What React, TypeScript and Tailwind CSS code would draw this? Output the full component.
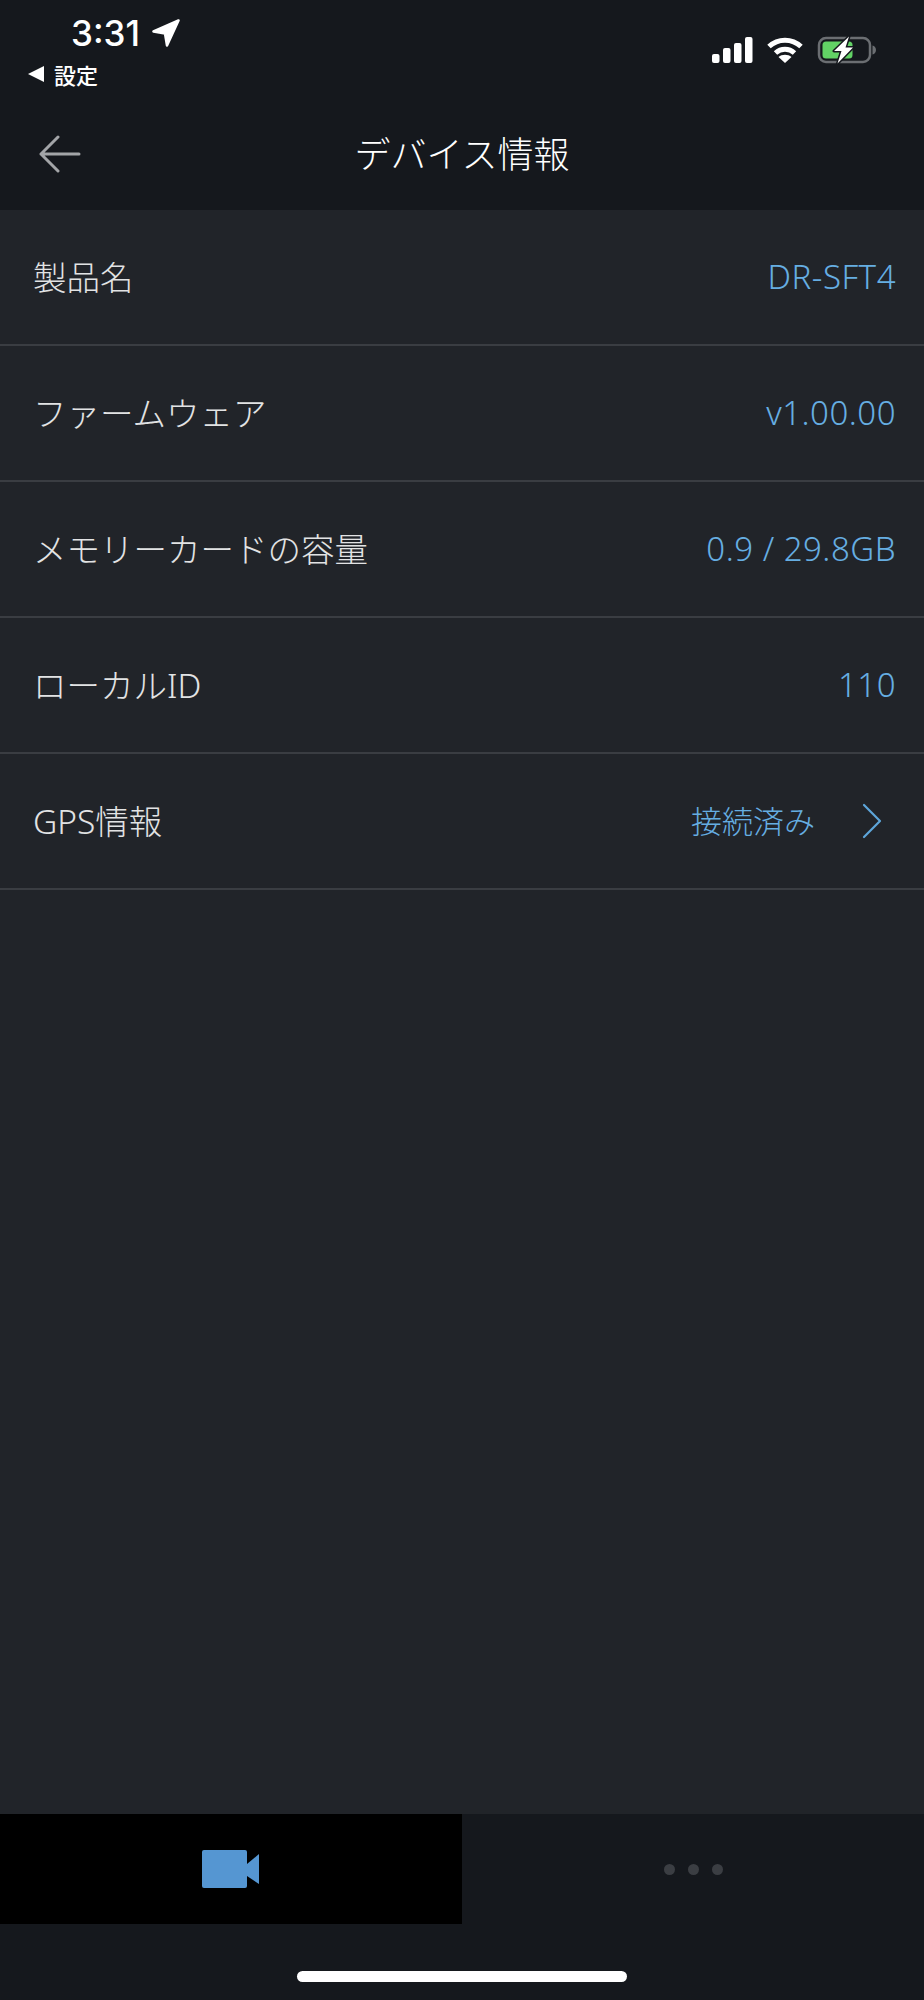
import React from 'react';

const rows = [
  { label: '製品名', value: 'DR-SFT4' },
  { label: 'ファームウェア', value: 'v1.00.00' },
  { label: 'メモリーカードの容量', value: '0.9 / 29.8GB' },
  { label: 'ローカルID', value: '110' },
  { label: 'GPS情報', value: '接続済み', link: true },
];

function StatusIcons() {
  return (
    <div className="flex items-center gap-[14px]">
      <svg width="41" height="26" viewBox="0 0 41 26" fill="#fff">
        <rect x="0" y="17" width="7.5" height="9" rx="2" />
        <rect x="11" y="11" width="7.5" height="15" rx="2" />
        <rect x="22" y="6" width="7.5" height="20" rx="2" />
        <rect x="33" y="0" width="7.5" height="26" rx="2" />
      </svg>
      <svg width="36" height="26" viewBox="0 0 36 26" fill="none" stroke="#fff" strokeWidth="5">
        <path d="M2 9.500C11 1 25 1 34 9.500" />
        <path d="M8.500 16C14 11 22 11 27.500 16" />
        <path d="M18 26L11.500 20C15 17 21 17 24.500 20Z" fill="#fff" stroke="none" />
      </svg>
      <svg width="60" height="30" viewBox="0 0 60 30">
        <rect x="2" y="3" width="51" height="24" rx="7" fill="none" stroke="#6b6e72" strokeWidth="2.500" />
        <path d="M55.500 10.500c2 .5 3.500 2.300 3.500 4.500s-1.500 4-3.500 4.500z" fill="#6b6e72" />
        <rect x="5.500" y="6.500" width="30" height="17" rx="3.500" fill="#62d265" />
        <path d="M32 1.500L17 16H24.500L20.500 28.500L36 12.500H28.500Z" fill="#fff" stroke="#15181d" strokeWidth="3" strokeLinejoin="round" paintOrder="stroke" />
      </svg>
    </div>
  );
}

export default function App() {
  return (
    <div
      className="flex h-[2000px] w-[924px] flex-col bg-[#212429]"
      style={{ fontFamily: '"Noto Sans", "Noto Sans CJK JP", sans-serif' }}
    >
      <header className="flex h-[210px] shrink-0 flex-col bg-[#15181d]">
        <div className="flex h-[100px] items-start justify-between pl-[28px] pr-[47px]">
          <div className="flex flex-col">
            <div className="ml-[43px] mt-[13px] flex h-[40px] items-center gap-[12px]">
              <span className="text-[35px] leading-[40px] font-medium text-white" style={{ fontFamily: 'Inter, sans-serif' }}>
                3:31
              </span>
              <svg width="28" height="28" viewBox="0 0 28 28" fill="#fff" stroke="#fff" strokeWidth="2.500" strokeLinejoin="round">
                <path d="M26.500 1.500L1.500 12.500L13 14.500L15 26.500Z" />
              </svg>
            </div>
            <div className="mt-[9px] flex h-[24px] items-center gap-[10px]">
              <svg width="16" height="16" viewBox="0 0 16 16" fill="#fff">
                <path d="M0 8L16 0V16Z" />
              </svg>
              <span className="text-[22px] leading-[24px] font-medium text-white" style={{ fontFamily: '"Noto Sans CJK JP", sans-serif' }}>
                設定
              </span>
            </div>
          </div>
          <div className="mt-[35px]">
            <StatusIcons />
          </div>
        </div>
        <div className="relative flex h-[110px] items-center justify-center">
          <svg className="absolute left-[39px] top-[35px]" width="42" height="38" viewBox="0 0 42 38" fill="none" stroke="#a3a5a8" strokeWidth="3" strokeLinecap="round" strokeLinejoin="round">
            <path d="M40 19H2M19 2L2 19L19 36" />
          </svg>
          <h1 className="text-[36px] leading-none font-light text-white">デバイス情報</h1>
        </div>
      </header>

      <main className="flex-1">
        {rows.map(row => (
          <div key={row.label} className="flex h-[136px] items-center justify-between border-b-2 border-[#3a3d42] pl-[33px] pr-[28px]">
            <span className="text-[33.500px] font-light text-[#e2e3e4]">{row.label}</span>
            <div className="flex items-center">
              <span className={row.link ? 'text-[31px] font-light text-[#66aee2]' : 'text-[33px] tracking-[0.5px] font-light text-[#66aee2]'}>{row.value}</span>
              {row.link && (
                <svg className="ml-[47px] mr-[14px]" width="20" height="36" viewBox="0 0 20 36" fill="none" stroke="#5ea6da" strokeWidth="2.200" strokeLinecap="round" strokeLinejoin="round">
                  <path d="M2 2L18 18L2 34" />
                </svg>
              )}
            </div>
          </div>
        ))}
      </main>

      <nav className="flex h-[110px] shrink-0 bg-[#15181d]">
        <div className="flex flex-1 items-center justify-center bg-black">
          <svg width="58" height="38" viewBox="0 0 58 38" fill="#5596d2">
            <rect x="0" y="0" width="45" height="38" rx="2" />
            <path d="M45 14L57 4V34L45 26Z" />
          </svg>
        </div>
        <div className="flex flex-1 items-center justify-center gap-[13px]">
          <span className="h-[11px] w-[11px] rounded-full bg-[#3b3e43]" />
          <span className="h-[11px] w-[11px] rounded-full bg-[#3b3e43]" />
          <span className="h-[11px] w-[11px] rounded-full bg-[#3b3e43]" />
        </div>
      </nav>

      <div className="flex h-[76px] shrink-0 justify-center bg-[#15181d] pt-[47px]">
        <div className="h-[11px] w-[330px] rounded-full bg-white" />
      </div>
    </div>
  );
}
